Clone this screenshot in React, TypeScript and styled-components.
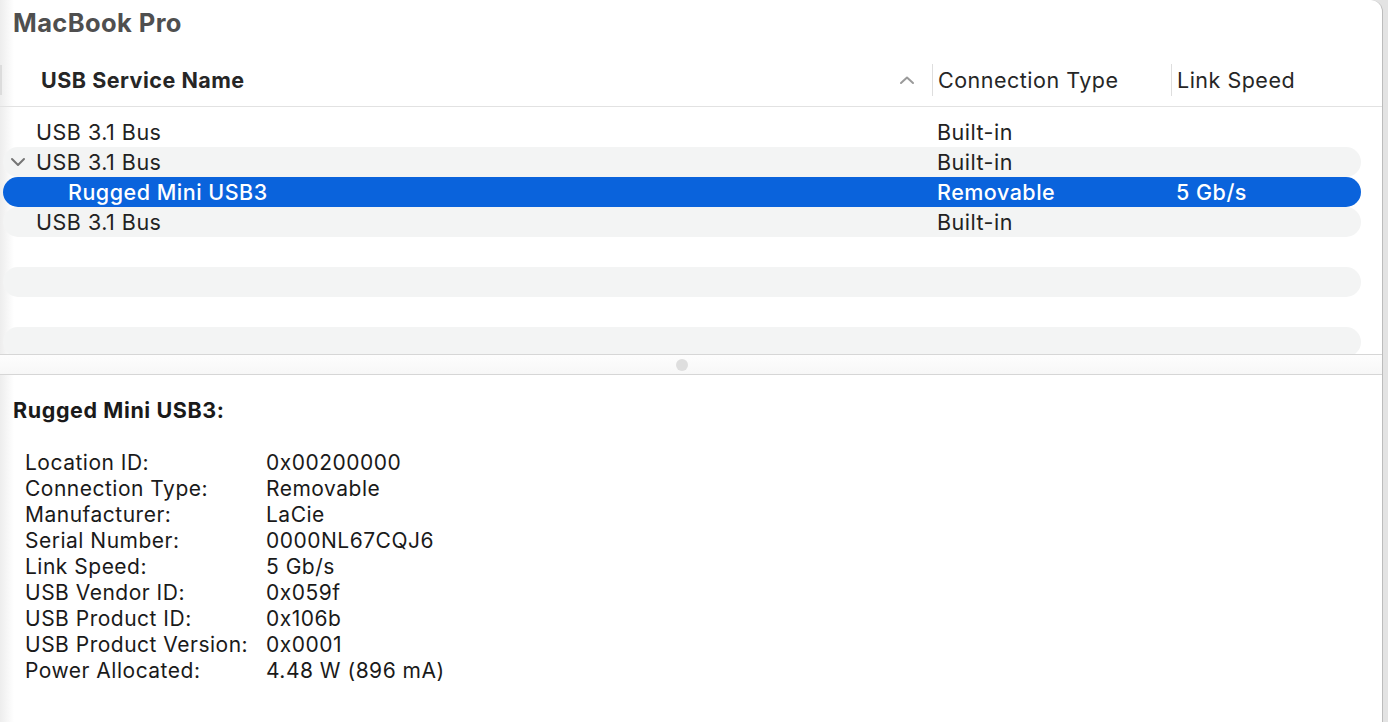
import React from 'react';
import styled, { createGlobalStyle } from 'styled-components';

const GlobalStyle = createGlobalStyle`
  html, body {
    margin: 0;
    padding: 0;
    background: #e3e3e3;
  }
  body {
    font-family: Inter, "Noto Sans", "Liberation Sans", sans-serif;
    color: #1d1d1f;
    -webkit-font-smoothing: antialiased;
  }
`;

const Window = styled.div`
  width: 1382px;
  height: 722px;
  background: linear-gradient(to right, #ededed 0px, #ffffff 14px);
  border-right: 1px solid #bcbcbc;
  border-top-right-radius: 12px;
  display: flex;
  flex-direction: column;
  overflow: hidden;
`;

const Title = styled.h1`
  margin: 0;
  height: 44px;
  padding-left: 13px;
  display: flex;
  align-items: center;
  font-size: 25.5px;
  font-weight: 700;
  color: #4f4f4f;
  letter-spacing: 0.4px;
`;

const Header = styled.div`
  margin-top: 18px;
  height: 44px;
  display: grid;
  grid-template-columns: 932px 239px 1fr;
  align-items: center;
  border-bottom: 1px solid #e2e2e2;
  position: relative;

  &::before {
    content: '';
    position: absolute;
    left: 0;
    top: 3px;
    width: 2px;
    height: 30px;
    background: #dcdcdc;
  }
`;

const HeaderCell = styled.div<{ $divider?: boolean; $bold?: boolean }>`
  display: flex;
  align-items: center;
  height: 32px;
  padding-left: ${(p) => (p.$bold ? '41px' : '5px')};
  padding-right: 16px;
  margin-top: -8px;
  font-size: 21.5px;
  letter-spacing: 0.5px;
  font-weight: ${(p) => (p.$bold ? 700 : 400)};
  color: #262626;
  border-left: ${(p) => (p.$divider ? '1px solid #dedede' : 'none')};
`;

const SortIcon = styled.svg`
  margin-left: auto;
  margin-right: 1px;
`;

const List = styled.div`
  height: 247px;
  padding-top: 10px;
  box-sizing: border-box;
  overflow: hidden;
`;

const Row = styled.div<{ $striped?: boolean; $selected?: boolean }>`
  margin-left: 3px;
  width: 1358px;
  height: 30px;
  border-radius: 15px;
  display: grid;
  grid-template-columns: 929px 239px 1fr;
  align-items: center;
  font-size: 21.5px;
  letter-spacing: 0.5px;
  font-weight: ${(p) => (p.$selected ? 500 : 400)};
  color: ${(p) => (p.$selected ? '#ffffff' : '#222222')};
  background: ${(p) => (p.$selected ? '#0a63dc' : p.$striped ? '#f3f4f4' : 'transparent')};
`;

const NameCell = styled.div<{ $depth?: number }>`
  position: relative;
  padding-left: ${(p) => (p.$depth ? 65 : 33)}px;
  white-space: nowrap;
`;

const Disclosure = styled.svg`
  position: absolute;
  left: 7px;
  top: 50%;
  margin-top: -5px;
`;

const Cell = styled.div`
  padding-left: 5px;
  white-space: nowrap;
`;

const Splitter = styled.div`
  height: 19px;
  border-top: 1px solid #d6d6d6;
  border-bottom: 1px solid #d6d6d6;
  background: linear-gradient(#fdfdfd, #f7f7f7);
  display: flex;
  align-items: center;
  justify-content: center;
`;

const Grip = styled.div`
  width: 12px;
  height: 12px;
  border-radius: 50%;
  background: #dedede;
  margin-left: -18px;
`;

const Detail = styled.section`
  padding: 21px 0 0 13px;
`;

const DetailTitle = styled.h2`
  margin: 0 0 26px;
  font-size: 21.5px;
  letter-spacing: 0.6px;
  line-height: 28px;
  font-weight: 700;
  color: #1a1a1a;
`;

const Props = styled.dl`
  margin: 0 0 0 12px;
  display: grid;
  grid-template-columns: 241px 1fr;
  font-size: 21px;
  letter-spacing: 0.5px;
  line-height: 26px;
  color: #1a1a1a;

  dt, dd {
    margin: 0;
    white-space: nowrap;
  }
`;

type Device = {
  name: string;
  kind: string;
  speed?: string;
  depth?: number;
  open?: boolean;
  selected?: boolean;
};

const devices: Device[] = [
  { name: 'USB 3.1 Bus', kind: 'Built-in' },
  { name: 'USB 3.1 Bus', kind: 'Built-in', open: true },
  { name: 'Rugged Mini USB3', kind: 'Removable', speed: '5 Gb/s', depth: 1, selected: true },
  { name: 'USB 3.1 Bus', kind: 'Built-in' },
];

const details: [string, string][] = [
  ['Location ID:', '0x00200000'],
  ['Connection Type:', 'Removable'],
  ['Manufacturer:', 'LaCie'],
  ['Serial Number:', '0000NL67CQJ6'],
  ['Link Speed:', '5 Gb/s'],
  ['USB Vendor ID:', '0x059f'],
  ['USB Product ID:', '0x106b'],
  ['USB Product Version:', '0x0001'],
  ['Power Allocated:', '4.48 W (896 mA)'],
];

const EMPTY_ROWS = 4;

export default function App() {
  return (
    <>
      <GlobalStyle />
      <Window>
        <Title>MacBook Pro</Title>
        <Header>
          <HeaderCell $bold>
            USB Service Name
            <SortIcon width="16" height="10" viewBox="0 0 16 10">
              <path d="M2 8 L8 2.5 L14 8" fill="none" stroke="#9a9a9a" strokeWidth="2" strokeLinecap="round" strokeLinejoin="round" />
            </SortIcon>
          </HeaderCell>
          <HeaderCell $divider>Connection Type</HeaderCell>
          <HeaderCell $divider>Link Speed</HeaderCell>
        </Header>
        <List>
          {devices.map((d, i) => (
            <Row key={i} $striped={i % 2 === 1} $selected={d.selected}>
              <NameCell $depth={d.depth}>
                {d.open && (
                  <Disclosure width="16" height="10" viewBox="0 0 16 10">
                    <path d="M2 2 L8 8 L14 2" fill="none" stroke="#757575" strokeWidth="2" strokeLinecap="round" strokeLinejoin="round" />
                  </Disclosure>
                )}
                {d.name}
              </NameCell>
              <Cell>{d.kind}</Cell>
              <Cell>{d.speed}</Cell>
            </Row>
          ))}
          {Array.from({ length: EMPTY_ROWS }).map((_, i) => (
            <Row key={`empty-${i}`} $striped={(devices.length + i) % 2 === 1} />
          ))}
        </List>
        <Splitter>
          <Grip />
        </Splitter>
        <Detail>
          <DetailTitle>Rugged Mini USB3:</DetailTitle>
          <Props>
            {details.map(([k, v]) => (
              <React.Fragment key={k}>
                <dt>{k}</dt>
                <dd>{v}</dd>
              </React.Fragment>
            ))}
          </Props>
        </Detail>
      </Window>
    </>
  );
}
